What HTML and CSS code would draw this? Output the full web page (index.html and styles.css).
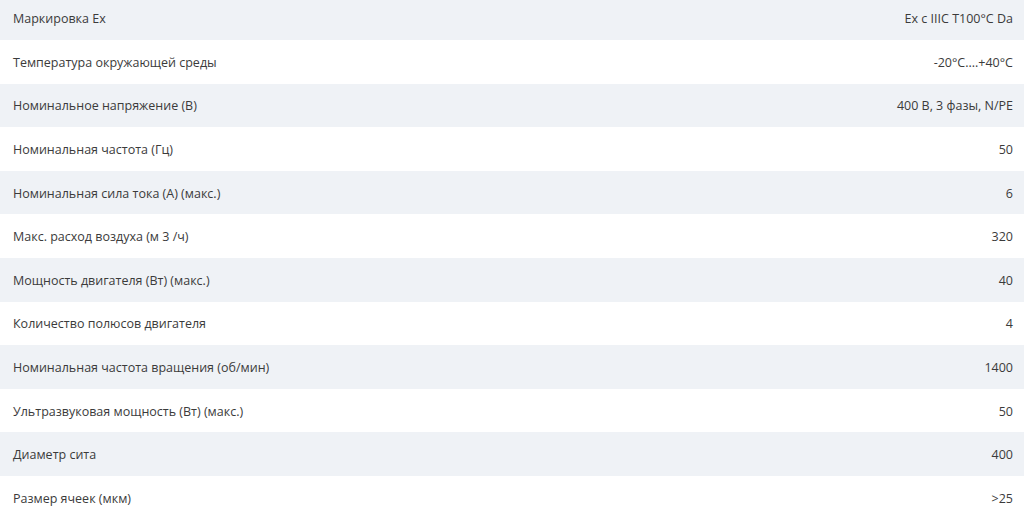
FILE: index.html
```html
<!DOCTYPE HTML>
<html>
<head>
  <meta charset="UTF-8">
  <title>Характеристики</title>
  <link rel="stylesheet" href="styles.css">
</head>
<body>
  <div id="specs">
    <!--таблица характеристик-->
    <dl class="row"><dt>Маркировка Ex</dt><dd>Ex c IIIC T100°C Da</dd></dl>
    <dl class="row"><dt>Температура окружающей среды</dt><dd>-20°C....+40°C</dd></dl>
    <dl class="row"><dt>Номинальное напряжение (В)</dt><dd>400 В, 3 фазы, N/PE</dd></dl>
    <dl class="row"><dt>Номинальная частота (Гц)</dt><dd>50</dd></dl>
    <dl class="row"><dt>Номинальная сила тока (А) (макс.)</dt><dd>6</dd></dl>
    <dl class="row"><dt>Макс. расход воздуха (м 3 /ч)</dt><dd>320</dd></dl>
    <dl class="row"><dt>Мощность двигателя (Вт) (макс.)</dt><dd>40</dd></dl>
    <dl class="row"><dt>Количество полюсов двигателя</dt><dd>4</dd></dl>
    <dl class="row"><dt>Номинальная частота вращения (об/мин)</dt><dd>1400</dd></dl>
    <dl class="row"><dt>Ультразвуковая мощность (Вт) (макс.)</dt><dd>50</dd></dl>
    <dl class="row"><dt>Диаметр сита</dt><dd>400</dd></dl>
    <dl class="row"><dt>Размер ячеек (мкм)</dt><dd>&gt;25</dd></dl>
  </div>
</body>
</html>
```

FILE: styles.css
```css
body{margin:0;font-family:"Open Sans","Noto Sans",sans-serif;background:#fff;}
dl,dd,dt{margin:0;}

#specs{
  margin-top: -3.6px;
}
#specs .row{
  display: flex;
  align-items: center;
  justify-content: space-between;
  box-sizing: border-box;
  height: 43.6px;
  padding: 1px 11px 0 13px;
  font-size: 12.5px;
  color: #3b3b3b;
}
#specs .row:nth-child(odd){
  background-color: #eff2f6;
}
```
